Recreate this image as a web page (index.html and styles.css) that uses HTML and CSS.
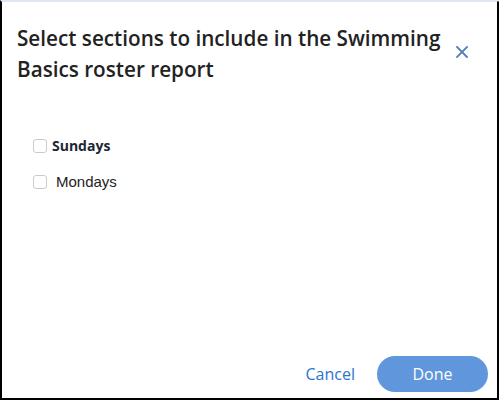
FILE: index.html
```html
<!DOCTYPE html>
<html>
<head>
<meta charset="utf-8">
<link rel="stylesheet" href="styles.css">
</head>
<body>
<div class="dialog">
  <div class="header">
    <h1 class="title">Select sections to include in the Swimming Basics roster report</h1>
    <button class="close" aria-label="Close">
      <svg width="12" height="12" viewBox="0 0 12 12"><path d="M1 1L11 11M11 1L1 11" stroke="#4f7fba" stroke-width="1.8" stroke-linecap="square"/></svg>
    </button>
  </div>
  <div class="body">
    <label class="option bold"><span class="box"></span><span>Sundays</span></label>
    <label class="option plain"><span class="box"></span><span>Mondays</span></label>
  </div>
  <div class="footer">
    <button class="cancel">Cancel</button>
    <button class="done">Done</button>
  </div>
</div>
</body>
</html>
```
FILE: styles.css
```css
html, body { margin: 0; padding: 0; background: #fff; }
body { width: 499px; height: 400px; overflow: hidden; }
.dialog {
  box-sizing: border-box;
  width: 499px;
  height: 400px;
  border: 2px solid #000;
  border-top: 2px solid #dfe6ee;
  border-top-right-radius: 3px;
  display: flex;
  flex-direction: column;
  font-family: "Open Sans", sans-serif;
}
.header {
  display: flex;
  align-items: flex-start;
  padding: 21px 0 0 15px;
}
.title {
  margin: 0;
  width: 438px;
  font-size: 20.7px;
  font-weight: 600;
  line-height: 31px;
  color: #222;
}
.close {
  background: none;
  border: 0;
  padding: 0;
  margin: 23px 0 0 1px;
  width: 12px;
  height: 12px;
  display: flex;
}
.body {
  flex: 1;
  padding: 50px 0 0 31px;
  display: flex;
  flex-direction: column;
  gap: 15px;
}
.option {
  display: flex;
  align-items: center;
  height: 21px;
}
.box {
  box-sizing: border-box;
  width: 14px;
  height: 14px;
  border: 1px solid #c8ccd2;
  border-radius: 3px;
  background: #fff;
}
.bold span:last-child {
  margin-left: 5px;
  font-family: "Open Sans", sans-serif;
  font-weight: 700;
  font-size: 14px;
  color: #1c2733;
}
.plain span:last-child {
  margin-left: 9px;
  font-family: "Liberation Sans", Arial, sans-serif;
  font-size: 15px;
  color: #222;
}
.footer {
  display: flex;
  justify-content: flex-end;
  align-items: center;
  gap: 22px;
  padding: 0 9px 6px 0;
}
.cancel {
  background: none;
  border: 0;
  padding: 0;
  font-family: "Open Sans", sans-serif;
  font-size: 16px;
  color: #2a76d2;
}
.done {
  width: 111px;
  height: 36px;
  border: 0;
  border-radius: 18px;
  background: #6096dc;
  color: #fff;
  font-family: "Open Sans", sans-serif;
  font-size: 16px;
}
```
